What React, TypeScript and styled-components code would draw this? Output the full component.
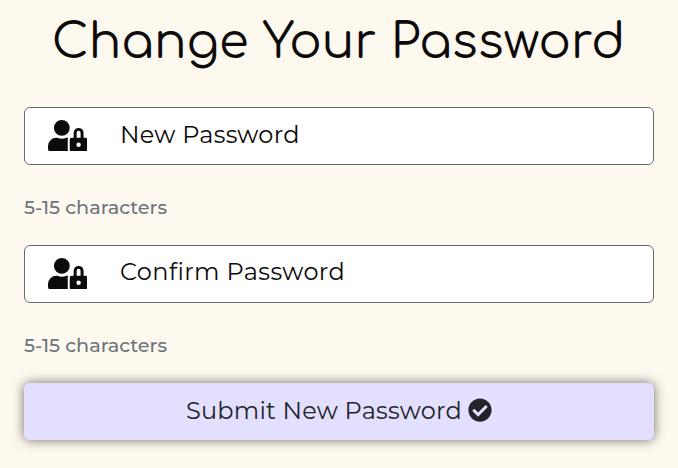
import React from "react";
import styled, { createGlobalStyle } from "styled-components";
import { FaCheckCircle } from "react-icons/fa";

const GlobalStyle = createGlobalStyle`
  * { box-sizing: border-box; }
  body { margin: 0; background: #fef9ef; }
`;

const Page = styled.main`
  height: 468px;
  padding: 0 24px;
  overflow: hidden;
  background: #fef9ef;
  font-family: Montserrat, Inter, sans-serif;
  color: #0d0a0b;
`;

const Title = styled.h1`
  height: 107px;
  margin: 0;
  padding-top: 11px;
  font: 400 48px/64px Comfortaa, Quicksand, Lato, sans-serif;
  letter-spacing: 0.1px;
  text-indent: -1px;
  text-align: center;
  white-space: nowrap;
`;

const Field = styled.label`
  display: flex;
  align-items: center;
  height: 58px;
  padding-left: 22.5px;
  border: 1px solid #6d6875;
  border-radius: 6px;
  background: #fff;
`;

const LockSvg = styled.svg`
  flex: none;
  width: 39.5px;
  height: 31.6px;
  margin-top: -1.4px;
`;

const Label = styled.span<{ $tracking: number; $lift: number }>`
  margin: -${(p) => p.$lift}px 0 0 33px;
  font-size: 24px;
  line-height: 30px;
  letter-spacing: ${(p) => p.$tracking}px;
  font-variant-ligatures: none;
  white-space: nowrap;
`;

const Hint = styled.small`
  display: block;
  height: 80px;
  padding-top: 29px;
  font-size: 19.2px;
  font-weight: 500;
  line-height: 26px;
  color: #6c757d;
`;

const Submit = styled.button`
  display: flex;
  align-items: center;
  justify-content: center;
  width: 100%;
  height: 57px;
  padding: 0;
  border: 0;
  border-radius: 6px;
  background: #e2dfff;
  box-shadow: 0 0 12px rgba(13, 10, 11, 0.6);
  color: #212529;
  font-family: inherit;
`;

const SubmitText = styled.span`
  margin-right: 6px;
  font-size: 24px;
  line-height: 30px;
  letter-spacing: 0.23px;
  white-space: nowrap;
  margin-top: -1px;
`;

const CheckIcon = styled(FaCheckCircle)`
  flex: none;
  width: 24px;
  height: 24px;
  margin-top: -3px;
`;

function UserLockIcon() {
  return (
    <LockSvg viewBox="0 0 640 512" fill="currentColor" aria-hidden="true">
      <path d="M224 256A128 128 0 1 0 96 128a128 128 0 0 0 128 128zm96 64a63.080 63.080 0 0 1 8.100-30.500c-4.800-.5-9.500-1.500-14.500-1.500h-16.700a174.080 174.080 0 0 1-145.800 0h-16.700A134.430 134.430 0 0 0 0 422.400V464a48 48 0 0 0 48 48h280.900a63.540 63.540 0 0 1-8.900-32z" />
      <path
        fillRule="evenodd"
        d="M608 288h-32v-80a80 80 0 0 0-160 0v80h-32a32 32 0 0 0-32 32v160a32 32 0 0 0 32 32h224a32 32 0 0 0 32-32V320a32 32 0 0 0-32-32zM496 436a36 36 0 1 1 0-72a36 36 0 0 1 0 72zM528 288h-64v-80a32 32 0 0 1 64 0z"
      />
    </LockSvg>
  );
}

const fields = [
  { label: "New Password", tracking: 0.25, lift: 3 },
  { label: "Confirm Password", tracking: 0.38, lift: 5 },
];

export default function App() {
  return (
    <Page>
      <GlobalStyle />
      <Title>Change Your Password</Title>
      {fields.map(({ label, tracking, lift }) => (
        <React.Fragment key={label}>
          <Field>
            <UserLockIcon />
            <Label $tracking={tracking} $lift={lift}>{label}</Label>
          </Field>
          <Hint>5-15 characters</Hint>
        </React.Fragment>
      ))}
      <Submit type="button">
        <SubmitText>Submit New Password</SubmitText>
        <CheckIcon />
      </Submit>
    </Page>
  );
}
